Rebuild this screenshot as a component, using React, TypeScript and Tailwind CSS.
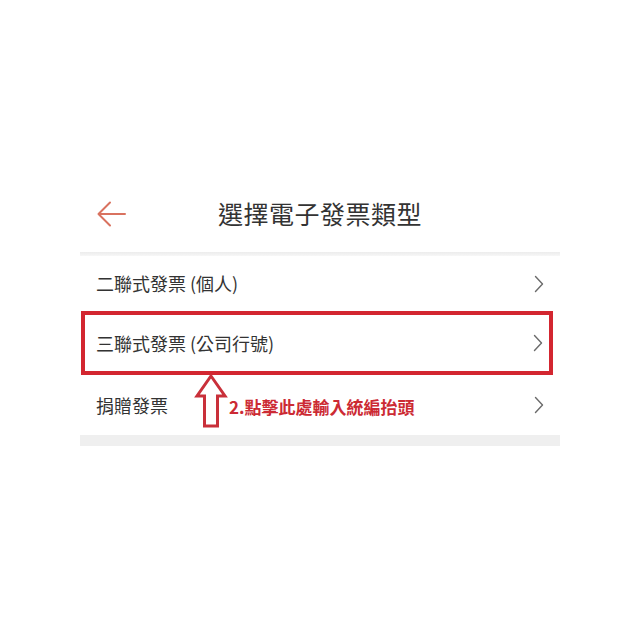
import React from "react"

const rows = [
    { label: "二聯式發票 (個人)", boxed: false },
    { label: "三聯式發票 (公司行號)", boxed: true },
    { label: "捐贈發票", boxed: false },
]

function Chevron() {
    return (
        <svg width="10" height="18" viewBox="0 0 10 18" fill="none" className="shrink-0">
            <path d="M1.5 1.5 L8.5 9 L1.5 16.5" stroke="#6b6b6b" strokeWidth="1.4" strokeLinecap="round" strokeLinejoin="round" />
        </svg>
    )
}

export default function App() {
    return (
        <div
            className="w-[640px] h-[640px] bg-white pt-[176px]"
            style={{ fontFamily: '"Noto Sans CJK TC", "Noto Sans", sans-serif' }}
        >
            <div className="w-[480px] mx-auto">
                {/* header */}
                <div className="relative h-[76px] flex items-center justify-center">
                    <svg width="30" height="26" viewBox="0 0 30 26" fill="none" className="absolute left-[17px] top-[25px]">
                        <path d="M13 1.5 L1.5 13 L13 24.5 M1.5 13 H28" stroke="#d9725f" strokeWidth="2" strokeLinecap="round" strokeLinejoin="round" />
                    </svg>
                    <h1 className="text-[25px] text-[#333] tracking-[0.5px]">選擇電子發票類型</h1>
                </div>
                <div className="h-[4px] bg-gradient-to-b from-[#ececec] to-[#f7f7f7]" />

                {/* list */}
                <div className="h-[55px] pl-[16px] pr-[16px] flex items-center justify-between">
                    <span className="text-[18px] text-[#333]">{rows[0].label}</span>
                    <Chevron />
                </div>
                <div className="h-[64px] ml-[1px] mr-[7px] border-4 border-[#d32630] pl-[11px] pr-[6px] flex items-center justify-between">
                    <span className="text-[18px] text-[#333]">{rows[1].label}</span>
                    <Chevron />
                </div>
                <div className="relative h-[60px] pl-[16px] pr-[16px] flex items-center justify-between">
                    <span className="text-[18px] text-[#333]">{rows[2].label}</span>
                    <Chevron />
                    {/* annotation */}
                    <svg width="34" height="56" viewBox="0 0 34 56" fill="none" className="absolute left-[114px] top-[-1px]">
                        <path d="M17 2 L31 22 L23.5 22 L23.5 52 L10.5 52 L10.5 22 L3 22 Z" stroke="#c9303a" strokeWidth="3" strokeLinejoin="miter" />
                    </svg>
                    <span className="absolute left-[149px] top-[22px] text-[17px] leading-[20px] font-bold text-[#cc2a33]">2.點擊此處輸入統編抬頭</span>
                </div>
                <div className="h-[11px] bg-[#efefef]" />
            </div>
        </div>
    )
}
